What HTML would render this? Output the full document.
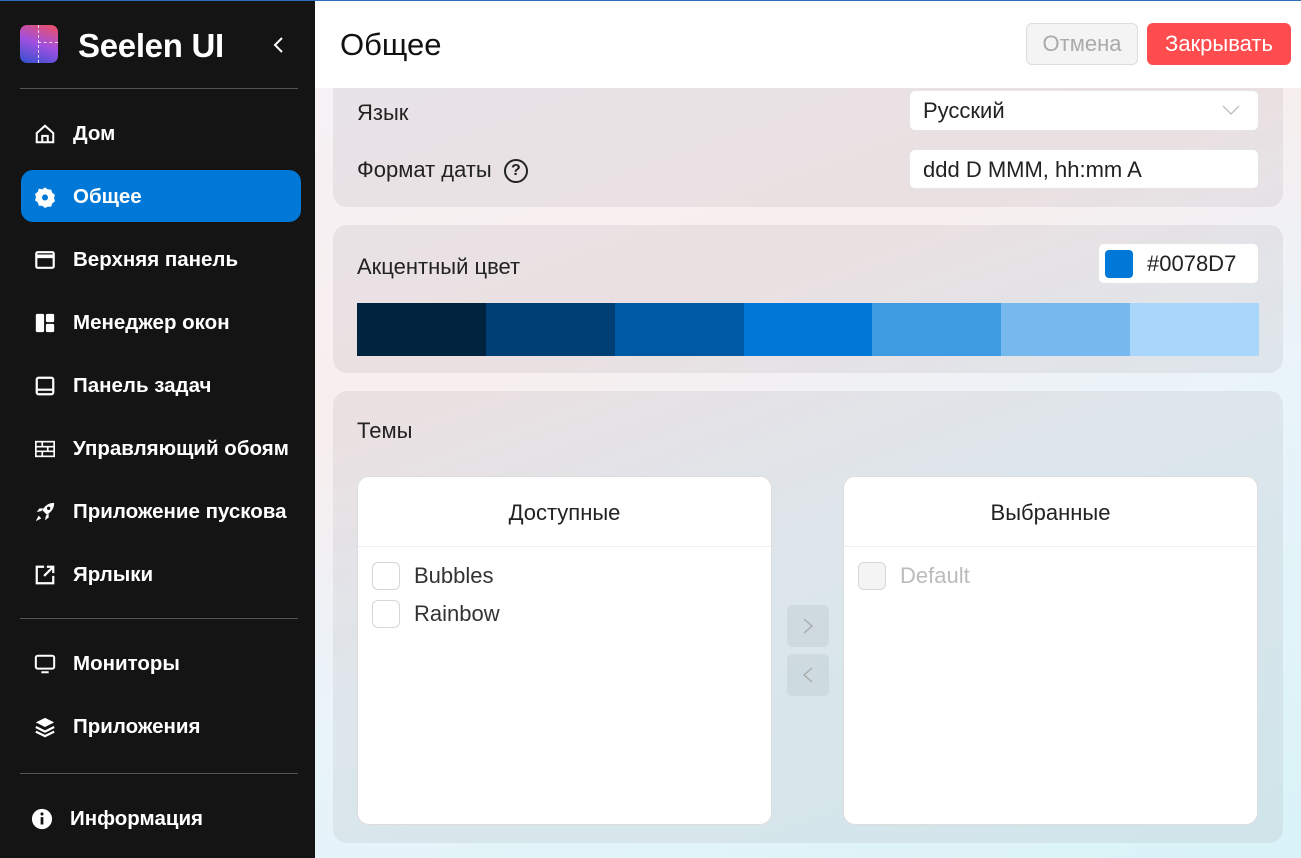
<!DOCTYPE html>
<html><head><meta charset="utf-8"><style>
*{box-sizing:border-box;margin:0;padding:0}
body{width:1301px;height:858px;overflow:hidden;font-family:"Segoe UI","Liberation Sans",sans-serif;position:relative;background:#fff}
.side{position:absolute;left:0;top:0;width:315px;height:858px;background:#141414;color:#fff}
.topline{position:absolute;left:0;top:0;width:1301px;height:1px;background:#2d6fb8;z-index:5}
.logo{position:absolute;left:20px;top:25px;width:38px;height:38px;border-radius:7px;background:linear-gradient(200deg,#f05060 0%,#a050e0 50%,#3050d0 100%);overflow:hidden}
.logo:before{content:"";position:absolute;left:18px;top:0;height:38px;border-left:1.5px dashed rgba(255,255,255,.8)}
.logo:after{content:"";position:absolute;left:18px;top:17px;width:20px;border-top:1.5px dashed rgba(255,255,255,.8)}
.brand{position:absolute;left:78px;top:27px;font-size:33px;font-weight:bold;letter-spacing:-.3px}
.chev{position:absolute;left:272px;top:36px}
.hr{position:absolute;left:20px;width:278px;height:1px;background:#555}
.item{position:absolute;left:21px;width:280px;height:52px;border-radius:12px;display:flex;align-items:center;font-weight:bold;font-size:20.5px;padding-top:2px}
.item svg{width:22px;height:22px;margin-left:13px;margin-right:17px;flex:none}
.item span{white-space:nowrap;overflow:hidden}
.act{background:#0078d7}
.main{position:absolute;left:315px;top:0;width:986px;height:858px;background:linear-gradient(160deg,#f4f2f6 0%,#f8eeee 35%,#e9f4fa 60%,#d9f3f8 100%)}
.head{position:absolute;left:0;top:0;width:986px;height:88px;background:#fff;z-index:3}
.title{position:absolute;left:25px;top:27px;font-size:31px;color:#111}
.btn{position:absolute;top:23px;height:42px;border-radius:6px;font-size:22px;display:flex;align-items:center;justify-content:center}
.card{position:absolute;left:18px;width:950px;background:rgba(120,110,120,.1);border-radius:14px}
.lbl{position:absolute;font-size:22px;color:#222}
.inp{position:absolute;background:#fff;border-radius:6px;border:1px solid #e4e4e4;font-size:22px;color:#222;padding-left:13px;display:flex;align-items:center}
.list{position:absolute;top:85px;width:415px;height:349px;background:#fff;border:1px solid #ddd;border-radius:12px}
.lh{height:70px;border-bottom:1px solid #eee;display:flex;align-items:center;justify-content:center;font-size:22px;color:#222}
.row{display:flex;align-items:center;height:38px;padding-left:14px;font-size:22px;color:#333}
.cb{width:28px;height:28px;border:1px solid #d6d6d6;border-radius:6px;margin-right:14px;background:#fff}
.ab{position:absolute;left:454px;width:42px;height:42px;border-radius:6px;background:rgba(0,0,0,.05);display:flex;align-items:center;justify-content:center}
</style></head><body>
<div class="topline"></div>
<div class="side">
<div class="logo"></div>
<div class="brand">Seelen UI</div>
<svg class="chev" width="14" height="18" viewBox="0 0 14 18"><path d="M10 2L3 9l7 7" fill="none" stroke="#fff" stroke-width="2"/></svg>
<div class="hr" style="top:88px"></div>
<div class="item" style="top:107px"><svg viewBox="0 0 24 24" fill="none" stroke="#fff" stroke-width="2.2"><path d="M3 11L12 3l9 8v10H3z"/><path d="M9 21v-7h6v7"/></svg><span>Дом</span></div>
<div class="item act" style="top:170px"><svg viewBox="0 0 24 24" fill="#fff"><path d="M12 1.5l3 2.2 3.7.2 1.2 3.5 3 2.3-1.1 3.5 1.1 3.5-3 2.2-1.2 3.6-3.7.1L12 24l-3-2.4-3.7-.1-1.2-3.6-3-2.2L2.2 12.2 1.1 8.7l3-2.3 1.2-3.5L9 3.7z"/><circle cx="12" cy="12.5" r="3.3" fill="#0078d7"/></svg><span>Общее</span></div>
<div class="item" style="top:233px"><svg viewBox="0 0 24 24" fill="none" stroke="#fff" stroke-width="2.4"><rect x="2.5" y="3.5" width="19" height="17" rx="1.5"/><path d="M2.5 8h19" stroke-width="4"/></svg><span>Верхняя панель</span></div>
<div class="item" style="top:296px"><svg viewBox="0 0 24 24" fill="#fff"><rect x="2" y="2" width="9" height="20" rx="1.5"/><rect x="13" y="2" width="9" height="9" rx="1.5"/><rect x="13" y="13" width="9" height="9" rx="1.5"/></svg><span>Менеджер окон</span></div>
<div class="item" style="top:359px"><svg viewBox="0 0 24 24" fill="none" stroke="#fff" stroke-width="2.4"><rect x="3" y="3" width="18" height="18" rx="2"/><path d="M3 16h18"/></svg><span>Панель задач</span></div>
<div class="item" style="top:422px"><svg viewBox="0 0 24 24" fill="none" stroke="#fff" stroke-width="1.8"><rect x="2" y="4" width="20" height="16"/><path d="M2 9.5h20M2 14.5h20M9 4v5.5M15 9.5v5M9 14.5V20"/></svg><span>Управляющий обоям</span></div>
<div class="item" style="top:485px"><svg viewBox="0 0 24 24" fill="#fff"><path d="M22 2c-6 0-10 3-13 8l5 5c5-3 8-7 8-13zM8 11l-5 1 3-4h4zM13 16l-1 5 4-3v-4zM5 16l-3 6 6-3z"/><circle cx="16" cy="8" r="1.8" fill="#141414"/></svg><span>Приложение пускова</span></div>
<div class="item" style="top:548px"><svg viewBox="0 0 24 24" fill="none" stroke="#fff" stroke-width="2.4"><path d="M11 3H3v18h18v-8"/><path d="M14 3h7v7M21 3l-10 10"/></svg><span>Ярлыки</span></div>
<div class="hr" style="top:618px"></div>
<div class="item" style="top:637px"><svg viewBox="0 0 24 24" fill="none" stroke="#fff" stroke-width="2.2"><rect x="2" y="3" width="20" height="14" rx="2"/><path d="M8 21h8"/></svg><span>Мониторы</span></div>
<div class="item" style="top:700px"><svg viewBox="0 0 24 24" fill="#fff"><path d="M12 2l10 5-10 5L2 7z"/><path d="M2 12l10 5 10-5M2 17l10 5 10-5" fill="none" stroke="#fff" stroke-width="2.4"/></svg><span>Приложения</span></div>
<div class="hr" style="top:773px"></div>
<div class="item" style="top:792px;left:18px"><svg viewBox="0 0 24 24"><circle cx="12" cy="12" r="11" fill="#fff"/><path d="M12 10v8" stroke="#141414" stroke-width="3"/><circle cx="12" cy="6.5" r="1.7" fill="#141414"/></svg><span>Информация</span></div>
</div>
<div class="main">
<div class="head"><div class="title">Общее</div>
<div class="btn" style="left:711px;width:112px;background:#f4f4f4;border:1px solid #ddd;color:#aaa">Отмена</div>
<div class="btn" style="left:832px;width:144px;background:#ff4d4f;color:#fff">Закрывать</div></div>
<div class="card" style="top:60px;height:147px">
<div class="lbl" style="left:24px;top:40px">Язык</div>
<div class="inp" style="left:576px;top:30px;width:350px;height:41px">Русский<svg style="position:absolute;right:18px;top:13px" width="18" height="12" viewBox="0 0 18 12"><path d="M1 2l8 8 8-8" fill="none" stroke="#bbb" stroke-width="1.3"/></svg></div>
<div class="lbl" style="left:24px;top:97px">Формат даты <span style="display:inline-block;width:24px;height:24px;border:2px solid #222;border-radius:50%;font-size:16px;text-align:center;line-height:20px;font-weight:bold;vertical-align:2px;margin-left:6px">?</span></div>
<div class="inp" style="left:576px;top:89px;width:350px;height:40px;padding-top:2px">ddd D MMM, hh:mm A</div>
</div>
<div class="card" style="top:225px;height:148px">
<div class="lbl" style="left:24px;top:29px">Акцентный цвет</div>
<div class="inp" style="left:765px;top:18px;width:161px;height:41px;padding-left:6px"><span style="width:28px;height:28px;background:#0078d7;border-radius:4px;margin-right:14px"></span>#0078D7</div>
<div style="position:absolute;left:24px;top:78px;width:902px;height:53px;display:flex">
<div style="flex:1;background:#00243f"></div><div style="flex:1;background:#003f73"></div><div style="flex:1;background:#005aa3"></div><div style="flex:1;background:#0078d7"></div><div style="flex:1;background:#3f9ce3"></div><div style="flex:1;background:#75b9ee"></div><div style="flex:1;background:#a8d7fb"></div></div>
</div>
<div class="card" style="top:391px;height:452px">
<div class="lbl" style="left:24px;top:27px">Темы</div>
<div class="list" style="left:24px"><div class="lh" style="padding-top:2px">Доступные</div>
<div style="height:10px"></div>
<div class="row"><span class="cb"></span>Bubbles</div>
<div class="row"><span class="cb"></span>Rainbow</div></div>
<div class="ab" style="top:214px"><svg width="14" height="20" viewBox="0 0 14 20"><path d="M3 3l8 7-8 7" fill="none" stroke="#aaa" stroke-width="1.4"/></svg></div>
<div class="ab" style="top:263px"><svg width="14" height="20" viewBox="0 0 14 20"><path d="M11 3L3 10l8 7" fill="none" stroke="#aaa" stroke-width="1.4"/></svg></div>
<div class="list" style="left:510px"><div class="lh" style="padding-top:2px">Выбранные</div>
<div style="height:10px"></div>
<div class="row" style="color:#bbb"><span class="cb" style="background:#f4f4f4"></span>Default</div></div>
</div>
</div>
</body></html>
